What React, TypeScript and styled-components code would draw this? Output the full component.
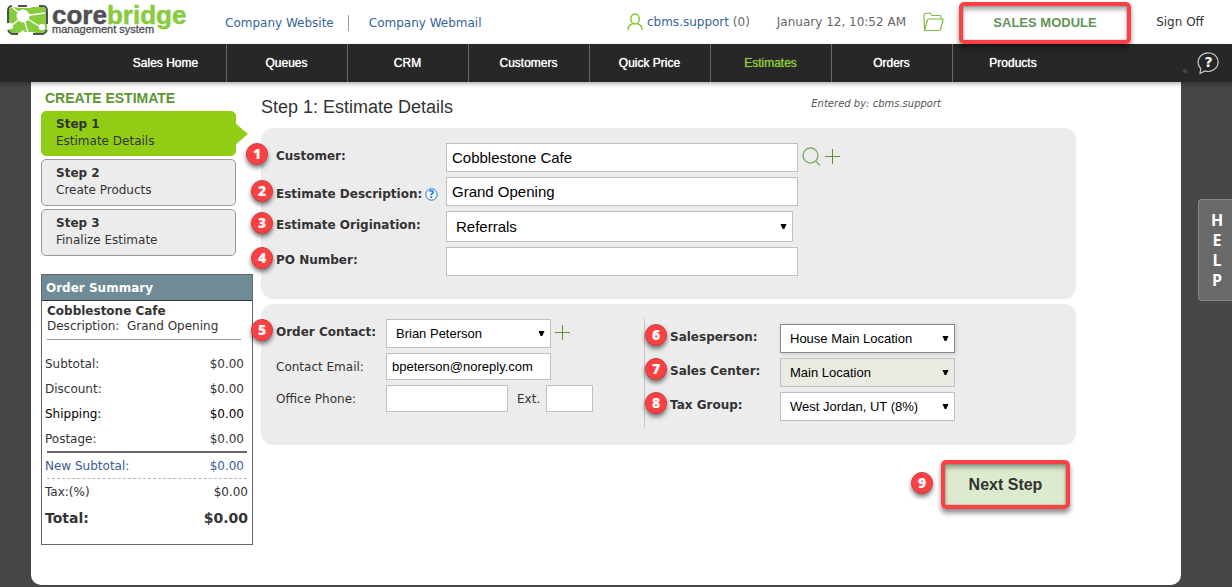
import React from "react";
import styled, { createGlobalStyle, css } from "styled-components";

const verdana = `Verdana, "DejaVu Sans", sans-serif`;
const arial = `"Liberation Sans", Arial, sans-serif`;

const GlobalStyle = createGlobalStyle`
  *, *::before, *::after { box-sizing: border-box; }
  body {
    margin: 0;
    min-height: 100vh;
    background: #464646;
    color: #333;
    font: 12px/16px ${verdana};
  }
  a { text-decoration: none; color: inherit; }
  button, input, select { margin: 0; border-radius: 0; }
`;

const Page = styled.div`
  position: relative;
`;

/* ---------- header ---------- */
const Header = styled.header`
  display: flex;
  align-items: center;
  height: 44px;
  padding-left: 5px;
  background: #fff;
`;

const LogoLink = styled.a`
  display: block;
  width: 220px;
  height: 44px;
`;

const CompanyLinks = styled.nav`
  display: flex;
  flex: 1;
  padding-top: 1px;
  a { color: #36639c; }
  a + a {
    margin-left: 14px;
    padding-left: 20px;
    border-left: 1px solid #999;
  }
`;

const UserInfo = styled.div`
  display: flex;
  align-items: center;
  color: #666;
  a { color: #36639c; }
  svg { display: block; }
`;

const UserName = styled.span`
  margin: 0 27px 0 4px;
`;

const FolderButton = styled.button`
  margin: 0 15px 0 17px;
  padding: 0;
  border: 0;
  background: none;
`;

const Highlight = styled.div`
  position: relative;
  z-index: 2;
  border: 4px solid #fb4143;
  border-radius: 5px;
  box-shadow: 0 4px 5px rgba(0, 0, 0, 0.45);
`;

const ModuleHighlight = styled(Highlight)`
  width: 172px;
  height: 42px;
  margin-top: 2px;
`;

const highlightInset = css`
  display: block;
  width: 100%;
  height: 100%;
  border: 0;
  box-shadow: inset 0 4px 4px rgba(0, 0, 0, 0.3), inset 0 0 2px rgba(0, 0, 0, 0.4);
  text-align: center;
`;

const ModuleLink = styled.a`
  ${highlightInset}
  background: #fff;
  color: #64935a;
  font: bold 13px/34px ${arial};
`;

const SignOff = styled.a`
  width: 101px;
  padding-right: 3px;
  text-align: center;
`;

/* ---------- main navigation ---------- */
const NavBar = styled.nav`
  position: relative;
  display: flex;
  align-items: center;
  height: 38px;
  padding: 0 13px 0 106px;
  background: #272727;
  box-shadow: 0 2px 4px rgba(0, 0, 0, 0.3);
`;

const NavItem = styled.a<{ $active?: boolean }>`
  width: 121px;
  padding: 1px 1px 0 0;
  border-right: 1px solid #686868;
  color: ${(p) => (p.$active ? "#8cc63f" : "#fff")};
  font: 12px/37px ${arial};
  text-align: center;
  text-shadow: 0 0 1px currentColor;
  &:last-of-type { border-right: 0; }
`;

const HelpButton = styled.button`
  display: flex;
  align-items: flex-end;
  margin-left: auto;
  padding: 0;
  border: 0;
  background: none;
`;

/* ---------- work area ---------- */
const Workspace = styled.div`
  display: flex;
  gap: 8px;
  min-height: 503px;
  margin: 0 51px 2px 31px;
  padding: 0 105px 24px 10px;
  border-radius: 0 0 10px 10px;
  background: #fff;
`;

const Sidebar = styled.aside`
  flex: none;
  width: 212px;
  padding-top: 8px;
`;

const SidebarTitle = styled.h2`
  margin: 0 0 5px 4px;
  color: #5c9632;
  font: bold 14px/16px ${arial};
`;

const Steps = styled.div`
  display: flex;
  flex-direction: column;
  gap: 3px;
  width: 195px;
`;

const Step = styled.a<{ $active?: boolean }>`
  position: relative;
  display: flex;
  flex-direction: column;
  padding: 5px 14px 6px;
  border: 1px solid #999;
  border-radius: 5px;
  background: #ececec;
  line-height: 17px;
  ${(p) =>
    p.$active &&
    css`
      padding-top: 4px;
      padding-bottom: 5px;
      border-color: #91cd15;
      background: #91cd15;
      &::after {
        content: "";
        position: absolute;
        top: 11px;
        left: 100%;
        border: solid transparent;
        border-width: 11px 0 11px 13px;
        border-left-color: #91cd15;
      }
    `}
`;

const Summary = styled.section`
  height: 271px;
  margin-top: 18px;
  border: 1px solid #666;
`;

const SummaryTitle = styled.h3`
  margin: 0;
  padding: 1px 4px 0;
  border-bottom: 1px solid #333;
  background: #6e8b96;
  color: #fff;
  font: bold 12px/24px ${verdana};
`;

const SummaryIntro = styled.div`
  display: flex;
  flex-direction: column;
  margin: 3px 11px 11px 5px;
  padding-bottom: 5px;
  border-bottom: 1px solid #999;
  line-height: 15px;
`;

const Spaced = styled.span`
  white-space: pre;
`;

const Totals = styled.table`
  width: 100%;
  border-collapse: collapse;
  th, td { padding: 0 8px 0 3px; height: 25px; line-height: 16px; }
  th { font-weight: normal; text-align: left; }
  td { text-align: right; }
`;

const TotalRow = styled.tr<{ $kind?: "dark" | "net" | "tax" | "grand" }>`
  ${(p) => p.$kind === "dark" && css`color: #000;`}
  ${(p) => p.$kind === "net" && css`color: #3b5998;`}
  ${(p) => (p.$kind === "tax" || p.$kind === "grand") && css`&& td { padding-right: 4px; }`}
  ${(p) => p.$kind === "grand" && css`&& th, && td { font-size: 14px; font-weight: bold; height: 28px; }`}
`;

const Rule = styled.hr<{ $dashed?: boolean }>`
  margin: 0 5px;
  border: 0;
  border-top: ${(p) => (p.$dashed ? "1px dashed #b5b5c0" : "2px solid #666")};
`;

/* ---------- form ---------- */
const Main = styled.main`
  flex: 1;
  min-width: 0;
`;

const MainHead = styled.div`
  display: flex;
  justify-content: space-between;
  height: 46px;
  padding: 14px 135px 0 0;
`;

const MainTitle = styled.h1`
  margin: 0;
  font: 18px/22px ${arial};
`;

const EnteredBy = styled.span`
  color: #555;
  font-size: 10px;
  font-style: italic;
`;

const Panel = styled.section`
  display: flex;
  margin-bottom: 5px;
  padding: 15px 15px 23px;
  border-radius: 12px;
  background: #ececec;
`;

const Fields = styled.div`
  display: flex;
  flex-direction: column;
  gap: 5px;
`;

const DetailFields = styled(Fields)`
  --label: 170px;
`;

const ContactFields = styled(Fields)`
  --label: 110px;
  width: 368px;
`;

const SalesFields = styled(Fields)`
  --label: 110px;
  padding: 5px 0 6px 25px;
  border-left: 1px solid #c4c4c4;
  margin-bottom: -5px;
`;

const Row = styled.div`
  display: flex;
  align-items: center;
  svg { display: block; }
`;

const Label = styled.label<{ $bold?: boolean; $raised?: boolean; $lowered?: boolean }>`
  --badge-bottom: ${(p) => (p.$raised ? 3 : 0)}px;
  position: relative;
  display: flex;
  align-items: center;
  gap: 3px;
  flex: none;
  width: var(--label);
  padding-bottom: ${(p) => (p.$raised ? 4 : 0)}px;
  padding-top: ${(p) => (p.$lowered ? 5 : 0)}px;
  font-weight: ${(p) => (p.$bold ? "bold" : "normal")};
  white-space: nowrap;
`;

const box = css`
  height: 29px;
  border: 1px solid #c0c0c0;
  background: #fff;
  color: #000;
`;

const TextInput = styled.input<{ $width: number; $compact?: boolean }>`
  ${box}
  width: ${(p) => p.$width}px;
  height: ${(p) => (p.$compact ? 27 : 29)}px;
  padding: 0 5px;
  font: ${(p) => (p.$compact ? 13 : 15)}px ${arial};
`;

const SelectWrap = styled.div<{ $width: number }>`
  position: relative;
  width: ${(p) => p.$width}px;
  svg {
    position: absolute;
    top: calc(50% - 4px);
    right: 6px;
    pointer-events: none;
  }
`;

const Select = styled.select<{ $tall?: boolean; $tone?: "strong" | "muted" }>`
  ${box}
  appearance: none;
  display: block;
  width: 100%;
  height: ${(p) => (p.$tall ? 31 : 29)}px;
  padding: 0 20px 0 9px;
  font: ${(p) => (p.$tall ? 15 : 13)}px ${arial};
  ${(p) =>
    p.$tone === "strong" &&
    css`
      border-color: #888;
      box-shadow: 1px 1px 4px rgba(0, 0, 0, 0.15);
    `}
  ${(p) => p.$tone === "muted" && css`background: #eaebe2;`}
`;

const IconButton = styled.button`
  margin-left: 4px;
  padding: 0 0 3px;
  border: 0;
  background: none;
`;

const Ext = styled.label`
  padding: 0 6px 0 9px;
`;

const Badge = styled.span`
  display: block;
  flex: none;
  width: 22px;
  height: 22px;
  border: 1px solid #d2383b;
  border-radius: 50%;
  background: #fb4143;
  box-shadow: 0 3px 4px rgba(0, 0, 0, 0.5);
  color: #fff;
  font: 800 14px/19px "Open Sans", "Noto Sans", sans-serif;
  text-align: center;
`;

const LabelBadge = styled(Badge)<{ $far?: boolean }>`
  position: absolute;
  bottom: var(--badge-bottom);
  left: ${(p) => (p.$far ? -30 : -25)}px;
`;

const Actions = styled.div`
  display: flex;
  justify-content: flex-end;
  gap: 8px;
  padding: 10px 6px 0 0;
  ${Badge} { margin-top: 12px; }
`;

const NextHighlight = styled(Highlight)`
  width: 129px;
  height: 49px;
`;

const NextButton = styled.button`
  ${highlightInset}
  padding: 0;
  background: #dcebcd;
  color: #333;
  font: bold 16px/18px ${arial};
`;

const HelpTab = styled.button`
  position: absolute;
  top: 199px;
  right: 0;
  display: flex;
  flex-direction: column;
  align-items: center;
  width: 34px;
  padding: 10px 0 10px 3px;
  border: 1px solid #888;
  border-right: 0;
  border-radius: 4px 0 0 4px;
  background: #696969;
  color: #fff;
  font: bold 16px/20px "Open Sans", "Noto Sans", sans-serif;
`;

/* ---------- drawings ---------- */
const Logo = () => (
  <svg width="190" height="44" viewBox="0 0 190 44" role="img" aria-label="corebridge management system">
    <path d="M4 9Q8 6 14 8H24Q30 6 39 7L42 12V30L37 34Q32 34 28 32H16Q9 35 4 32Z" fill="#86cc3c" />
    <path d="M18 16 8 8M18 16 5 27M18 16 24 36M18 16 37 28M18 16 40 13" fill="none" stroke="#fff" strokeWidth="1.400" />
    <g fill="#fff">
      <circle cx="18" cy="16" r="6.500" />
      <circle cx="5" cy="26" r="3.200" />
      <circle cx="37" cy="27" r="3.200" />
      <path d="M12 36 18 30 24 36Z" />
    </g>
    <g fill="none" stroke="#4d4f53" strokeWidth="2">
      <path d="M13 6H22M7 6Q3 6 3 11V23M3 30Q4 33 7 34H13M34 6H38Q42 6 42 11V24M42 30Q41 33 38 34H28" />
    </g>
    <text x="47" y="24" fontFamily="'Liberation Sans', Arial, sans-serif" fontSize="26" fontWeight="700" fill="#4d4f53" stroke="#4d4f53" strokeWidth="0.500">
      core<tspan fill="#86cc3c" stroke="#86cc3c">bridge</tspan>
    </text>
    <text x="47" y="33" fontFamily="'Liberation Sans', Arial, sans-serif" fontSize="11" fill="#4d4f53" stroke="#4d4f53" strokeWidth="0.300">
      management system
    </text>
  </svg>
);

const UserIcon = () => (
  <svg width="16" height="18" viewBox="0 0 16 18" fill="none" stroke="#7ec225" strokeWidth="1.400">
    <ellipse cx="8" cy="6" rx="4.200" ry="5" />
    <path d="M1 17C1 13 3 11.500 6 10.600M15 17C15 13 13 11.500 10 10.600" />
  </svg>
);

const FolderIcon = () => (
  <svg width="21" height="20" viewBox="0 0 21 20" fill="none" stroke="#7ebd45" strokeWidth="1.200" strokeLinejoin="round">
    <path d="M1.500 18.500 1 3Q1 1.500 2.500 1.500L7 1 9 3.500H17Q18 3.500 18 5V7M1.500 18.500 4.500 8Q5 7 6 7H19.500Q20.500 7 20 8L17.500 17.500Q17.200 18.500 16 18.500Z" />
  </svg>
);

const HelpBubble = () => (
  <svg width="36" height="24" viewBox="0 0 36 24">
    <circle cx="2" cy="20" r="2" fill="#464646" />
    <path d="M17.800 17.500A10 9.300 0 1 1 22 20L17 22.500Z" fill="none" stroke="#c5ccd2" strokeWidth="1.200" />
    <text x="25.500" y="16" textAnchor="middle" fontFamily="'DejaVu Sans', sans-serif" fontSize="14" fontWeight="700" fill="#fff">?</text>
  </svg>
);

const HintIcon = () => (
  <svg width="13" height="13" viewBox="0 0 13 13">
    <circle cx="6.500" cy="6.500" r="5.700" fill="#f4f8fc" stroke="#1f78d1" strokeWidth="1" />
    <text x="6.500" y="10" textAnchor="middle" fontFamily="'DejaVu Sans', sans-serif" fontSize="10" fontWeight="700" fill="#1f78d1">?</text>
  </svg>
);

const SearchIcon = () => (
  <svg width="19" height="19" viewBox="0 0 19 19" fill="none" stroke="#7fb069" strokeWidth="1.400">
    <circle cx="8.500" cy="8.500" r="7.500" />
    <path d="M13.500 14 18 18.500" />
  </svg>
);

const PlusIcon = () => (
  <svg width="15" height="15" viewBox="0 0 15 15" stroke="#5c9632">
    <path d="M0 7.500H15M7.500 0V15" />
  </svg>
);

const Arrow = () => (
  <svg width="7" height="7" viewBox="0 0 7 7">
    <path d="M0.500 1H6.500L4.300 6H2.700Z" fill="#000" />
  </svg>
);

/* ---------- composed controls ---------- */
type DropDownProps = {
  id: string;
  value: string;
  width: number;
  tall?: boolean;
  tone?: "strong" | "muted";
};

const DropDown = ({ id, value, width, tall, tone }: DropDownProps) => (
  <SelectWrap $width={width}>
    <Select id={id} defaultValue={value} $tall={tall} $tone={tone}>
      <option>{value}</option>
    </Select>
    <Arrow />
  </SelectWrap>
);

const navItems = ["Sales Home", "Queues", "CRM", "Customers", "Quick Price", "Estimates", "Orders", "Products"];

const steps = ["Estimate Details", "Create Products", "Finalize Estimate"];

export default function App() {
  return (
    <Page>
      <GlobalStyle />
      <Header>
        <LogoLink href="#"><Logo /></LogoLink>
        <CompanyLinks>
          <a href="#">Company Website</a>
          <a href="#">Company Webmail</a>
        </CompanyLinks>
        <UserInfo>
          <UserIcon />
          <UserName><a href="#">cbms.support</a> (0)</UserName>
          <span>January 12, 10:52 AM</span>
          <FolderButton aria-label="Files"><FolderIcon /></FolderButton>
        </UserInfo>
        <ModuleHighlight><ModuleLink href="#">SALES MODULE</ModuleLink></ModuleHighlight>
        <SignOff href="#">Sign Off</SignOff>
      </Header>

      <NavBar>
        {navItems.map((item) => (
          <NavItem key={item} href="#" $active={item === "Estimates"}>{item}</NavItem>
        ))}
        <HelpButton aria-label="Help"><HelpBubble /></HelpButton>
      </NavBar>

      <Workspace>
        <Sidebar>
          <SidebarTitle>CREATE ESTIMATE</SidebarTitle>
          <Steps>
            {steps.map((name, i) => (
              <Step key={name} href="#" $active={i === 0}>
                <strong>Step {i + 1}</strong>
                <span>{name}</span>
              </Step>
            ))}
          </Steps>
          <Summary>
            <SummaryTitle>Order Summary</SummaryTitle>
            <SummaryIntro>
              <strong>Cobblestone Cafe</strong>
              <Spaced>Description:  Grand Opening</Spaced>
            </SummaryIntro>
            <Totals>
              <tbody>
                <TotalRow><th>Subtotal:</th><td>$0.00</td></TotalRow>
                <TotalRow><th>Discount:</th><td>$0.00</td></TotalRow>
                <TotalRow $kind="dark"><th>Shipping:</th><td>$0.00</td></TotalRow>
                <TotalRow><th>Postage:</th><td>$0.00</td></TotalRow>
              </tbody>
            </Totals>
            <Rule />
            <Totals>
              <tbody>
                <TotalRow $kind="net"><th>New Subtotal:</th><td>$0.00</td></TotalRow>
              </tbody>
            </Totals>
            <Rule $dashed />
            <Totals>
              <tbody>
                <TotalRow $kind="tax"><th>Tax:(%)</th><td>$0.00</td></TotalRow>
                <TotalRow $kind="grand"><th>Total:</th><td>$0.00</td></TotalRow>
              </tbody>
            </Totals>
          </Summary>
        </Sidebar>

        <Main>
          <MainHead>
            <MainTitle>Step 1: Estimate Details</MainTitle>
            <EnteredBy>Entered by: cbms.support</EnteredBy>
          </MainHead>

          <Panel>
            <DetailFields>
              <Row>
                <Label htmlFor="customer" $bold $raised><LabelBadge $far>1</LabelBadge>Customer:</Label>
                <TextInput id="customer" defaultValue="Cobblestone Cafe" $width={352} />
                <IconButton aria-label="Search customers"><SearchIcon /></IconButton>
                <IconButton aria-label="Add customer"><PlusIcon /></IconButton>
              </Row>
              <Row>
                <Label htmlFor="description" $bold $lowered>
                  <LabelBadge>2</LabelBadge>Estimate Description:<HintIcon />
                </Label>
                <TextInput id="description" defaultValue="Grand Opening" $width={352} />
              </Row>
              <Row>
                <Label htmlFor="origination" $bold $raised><LabelBadge>3</LabelBadge>Estimate Origination:</Label>
                <DropDown id="origination" value="Referrals" width={347} tall />
              </Row>
              <Row>
                <Label htmlFor="po" $bold $raised><LabelBadge>4</LabelBadge>PO Number:</Label>
                <TextInput id="po" $width={352} />
              </Row>
            </DetailFields>
          </Panel>

          <Panel>
            <ContactFields>
              <Row>
                <Label htmlFor="contact" $bold $raised><LabelBadge>5</LabelBadge>Order Contact:</Label>
                <DropDown id="contact" value="Brian Peterson" width={165} />
                <IconButton aria-label="Add contact"><PlusIcon /></IconButton>
              </Row>
              <Row>
                <Label htmlFor="email">Contact Email:</Label>
                <TextInput id="email" defaultValue="bpeterson@noreply.com" $width={165} $compact />
              </Row>
              <Row>
                <Label htmlFor="phone">Office Phone:</Label>
                <TextInput id="phone" $width={122} $compact />
                <Ext htmlFor="ext">Ext.</Ext>
                <TextInput id="ext" $width={47} $compact />
              </Row>
            </ContactFields>
            <SalesFields>
              <Row>
                <Label htmlFor="salesperson" $bold $raised><LabelBadge>6</LabelBadge>Salesperson:</Label>
                <DropDown id="salesperson" value="House Main Location" width={175} tone="strong" />
              </Row>
              <Row>
                <Label htmlFor="center" $bold $raised><LabelBadge>7</LabelBadge>Sales Center:</Label>
                <DropDown id="center" value="Main Location" width={175} tone="muted" />
              </Row>
              <Row>
                <Label htmlFor="tax" $bold $raised><LabelBadge>8</LabelBadge>Tax Group:</Label>
                <DropDown id="tax" value="West Jordan, UT (8%)" width={175} />
              </Row>
            </SalesFields>
          </Panel>

          <Actions>
            <Badge>9</Badge>
            <NextHighlight><NextButton>Next Step</NextButton></NextHighlight>
          </Actions>
        </Main>
      </Workspace>

      <HelpTab aria-label="HELP">
        <span>H</span><span>E</span><span>L</span><span>P</span>
      </HelpTab>
    </Page>
  );
}
